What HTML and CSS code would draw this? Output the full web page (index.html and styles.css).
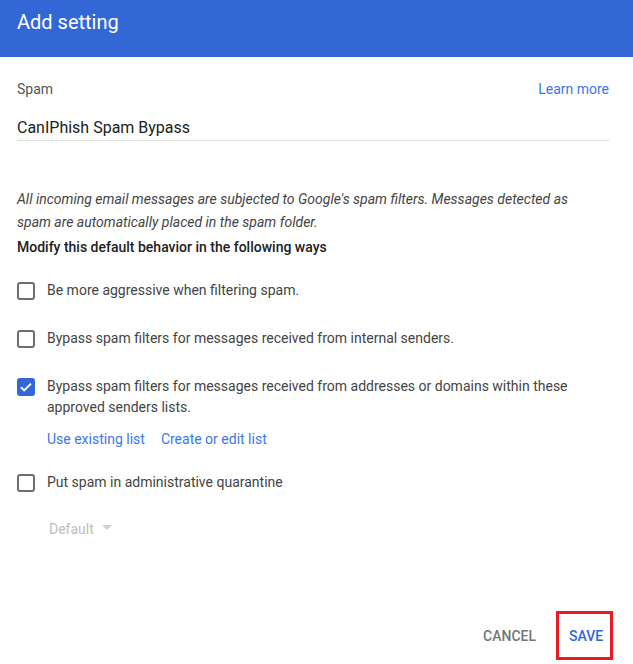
FILE: index.html
```html
<!DOCTYPE html>
<html lang="en">
<head>
    <meta charset="UTF-8">
    <title>Add setting</title>
    <link rel="stylesheet" href="styles.css">
</head>
<body>
    <div class="dialog">
        <div class="dialog-header">Add setting</div>
        <div class="dialog-body">
            <div class="field-top">
                <span class="field-label">Spam</span>
                <a class="link" href="#">Learn more</a>
            </div>
            <div class="field-input">CanIPhish Spam Bypass</div>

            <p class="note">All incoming email messages are subjected to Google's spam filters. Messages detected as spam are automatically placed in the spam folder.</p>
            <p class="note-title">Modify this default behavior in the following ways</p>

            <div class="option">
                <span class="box"></span>
                <span class="option-text">Be more aggressive when filtering spam.</span>
            </div>
            <div class="option">
                <span class="box"></span>
                <span class="option-text">Bypass spam filters for messages received from internal senders.</span>
            </div>
            <div class="option">
                <span class="box checked">
                    <svg width="18" height="18" viewBox="0 0 18 18"><path d="M4 9.2l3.2 3.2L14 5.6" fill="none" stroke="#fff" stroke-width="2"/></svg>
                </span>
                <span class="option-text">Bypass spam filters for messages received from addresses or domains within these approved senders lists.</span>
            </div>
            <div class="option-links">
                <a class="link" href="#">Use existing list</a>
                <a class="link" href="#">Create or edit list</a>
            </div>
            <div class="option option-last">
                <span class="box"></span>
                <span class="option-text">Put spam in administrative quarantine</span>
            </div>
            <div class="select-off">
                Default
                <span class="caret"></span>
            </div>
        </div>
        <div class="dialog-actions">
            <button class="btn btn-cancel">CANCEL</button>
            <button class="btn btn-save">SAVE</button>
        </div>
    </div>
</body>
</html>
```

FILE: styles.css
```css
body {
    margin: 0;
    font-family: Roboto, Arial, sans-serif;
    background-color: #fff;
    color: #212121;
}
.dialog {
    width: 633px;
    height: 664px;
    display: flex;
    flex-direction: column;
}
.dialog-header {
    background-color: #3367d6;
    color: #fff;
    font-size: 20px;
    height: 57px;
    box-sizing: border-box;
    padding: 10px 17px 0;
}
.dialog-body {
    padding: 23px 24px 0 17px;
    flex: 1;
}
.field-top {
    display: flex;
    justify-content: space-between;
    align-items: baseline;
    font-size: 14px;
    line-height: 19px;
}
.field-label {
    color: #555;
}
.link {
    color: #3b78e7;
    text-decoration: none;
    font-size: 14px;
}
.field-input {
    margin-top: 19px;
    font-size: 16px;
    line-height: 20px;
    padding-bottom: 2px;
    border-bottom: 1px solid #e0e0e0;
}
.note {
    margin: 47px 0 0;
    max-width: 580px;
    font-size: 14px;
    line-height: 23px;
    font-style: italic;
    color: #444;
}
.note-title {
    margin: 2px 0 0;
    font-size: 14px;
    font-weight: 500;
    line-height: 23px;
}
.option {
    display: flex;
    align-items: flex-start;
    margin-top: 21px;
    font-size: 14px;
    line-height: 21px;
    color: #444;
}
.option + .option {
    margin-top: 27px;
}
.option.option-last {
    margin-top: 22px;
}
.box {
    flex: none;
    width: 18px;
    height: 18px;
    box-sizing: border-box;
    border: 2px solid #6e6e6e;
    border-radius: 3px;
    margin: 2px 12px 0 0;
    position: relative;
}
.box.checked {
    background-color: #3367d6;
    border-color: #3367d6;
}
.box svg {
    position: absolute;
    left: -2px;
    top: -2px;
}
.option-text {
    max-width: 540px;
}
.option-links {
    display: flex;
    gap: 16px;
    margin: 10px 0 0 30px;
    line-height: 22px;
}
.select-off {
    margin: 25px 0 0 32px;
    font-size: 14px;
    color: #bdbdbd;
    display: flex;
    align-items: center;
    gap: 8px;
    line-height: 22px;
}
.caret {
    width: 0;
    height: 0;
    border-left: 5px solid transparent;
    border-right: 5px solid transparent;
    border-top: 5px solid #d0d0d0;
    margin-top: -4px;
}
.dialog-actions {
    display: flex;
    justify-content: flex-end;
    align-items: flex-end;
    gap: 10px;
    padding: 0 20px 4px 0;
    height: 60px;
    box-sizing: border-box;
}
.btn {
    font-family: Roboto, Arial, sans-serif;
    font-size: 14px;
    font-weight: 500;
    background: none;
    border: none;
    padding: 0 10px;
    height: 49px;
    cursor: pointer;
}
.btn-cancel {
    color: #757575;
}
.btn-save {
    color: #3367d6;
    border: 3px solid #e81c24;
    width: 57px;
}
```
